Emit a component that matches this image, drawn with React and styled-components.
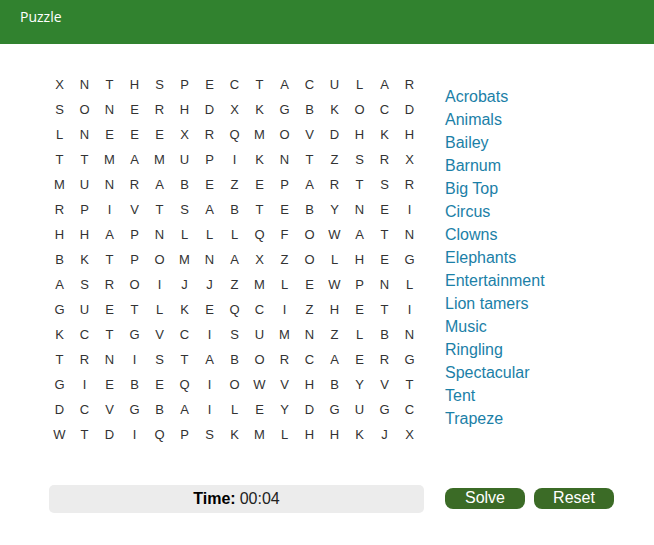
import React from "react"
import styled, { createGlobalStyle } from "styled-components"

const GlobalStyle = createGlobalStyle`
  body {
    margin: 0;
    background: #fff;
    font-family: "Liberation Sans", Arial, sans-serif;
  }
`

const Header = styled.header`
  height: 44px;
  background: #31822f;
  color: #fff;
  font-family: "Open Sans", sans-serif;
  font-size: 14px;
  padding: 7px 0 0 20px;
  box-sizing: border-box;
`

const Main = styled.main`
  display: flex;
  align-items: flex-start;
  gap: 23px;
  padding: 28px 0 0 47px;
`

const Grid = styled.div`
  display: grid;
  grid-template-columns: repeat(15, 25px);
  grid-auto-rows: 25px;
`

const Cell = styled.span`
  display: flex;
  align-items: center;
  justify-content: center;
  font-size: 13px;
  color: #333;
`

const WordList = styled.ul`
  list-style: none;
  margin: 0;
  padding: 13px 0 0;
`

const Word = styled.li`
  font-size: 16px;
  line-height: 23px;
  color: #1b80a7;
`

const Footer = styled.div`
  display: flex;
  align-items: center;
  padding: 38px 0 0 49px;
`

const Timer = styled.div`
  width: 375px;
  height: 28px;
  border-radius: 5px;
  background: #ececec;
  display: flex;
  align-items: center;
  justify-content: center;
  font-size: 16px;
  color: #222;
  gap: 4px;
`

const Label = styled.b`
  color: #000;
`

const Actions = styled.div`
  display: flex;
  gap: 9px;
  margin: 0 0 2px 21px;
`

const Button = styled.button`
  width: 80px;
  height: 21px;
  border: none;
  border-radius: 8px;
  background: #3b6b26;
  color: #fff;
  font-family: "Liberation Sans", Arial, sans-serif;
  font-size: 16px;
  padding: 0;
  line-height: 20px;
  cursor: pointer;
`

const rows = [
  "XNTHSPECTACULAR",
  "SONERHDXKGBKOCD",
  "LNEEEXRQMOVDHKH",
  "TTMAMUPIKNTZSRX",
  "MUNRABEZEPARTSR",
  "RPIVTSABTEBYNEI",
  "HHAPNLLLQFOWATN",
  "BKTPOMNAXZOLHEG",
  "ASROIJJZMLEWPNL",
  "GUETLKEQCIZHETI",
  "KCTGVCISUMNZLBN",
  "TRNISTABORCAERG",
  "GIEBEQIOWVHBYVT",
  "DCVGBAILEYDGUGC",
  "WTDIQPSKMLHHKJX",
]

const words = [
  "Acrobats",
  "Animals",
  "Bailey",
  "Barnum",
  "Big Top",
  "Circus",
  "Clowns",
  "Elephants",
  "Entertainment",
  "Lion tamers",
  "Music",
  "Ringling",
  "Spectacular",
  "Tent",
  "Trapeze",
]

const App = () => (
  <>
    <GlobalStyle />
    <Header>Puzzle</Header>
    <Main>
      <Grid>
        {rows.map((row, r) =>
          row.split("").map((ch, c) => <Cell key={`${r}-${c}`}>{ch}</Cell>)
        )}
      </Grid>
      <WordList>
        {words.map((w) => (
          <Word key={w}>{w}</Word>
        ))}
      </WordList>
    </Main>
    <Footer>
      <Timer>
        <Label>Time:</Label> 00:04
      </Timer>
      <Actions>
        <Button>Solve</Button>
        <Button>Reset</Button>
      </Actions>
    </Footer>
  </>
)

export default App
